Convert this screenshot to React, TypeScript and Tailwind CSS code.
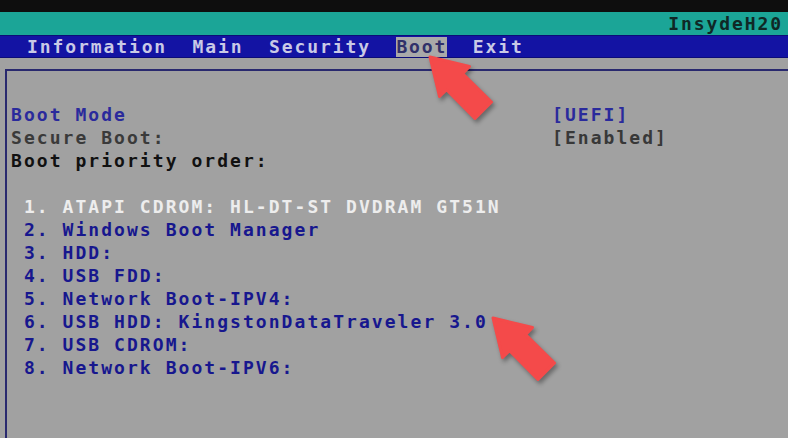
const items = [
  { text: ' 1. ATAPI CDROM: HL-DT-ST DVDRAM GT51N', color: 'text-[#ededed]' },
  { text: ' 2. Windows Boot Manager', color: 'text-[#17178e]' },
  { text: ' 3. HDD:', color: 'text-[#17178e]' },
  { text: ' 4. USB FDD:', color: 'text-[#17178e]' },
  { text: ' 5. Network Boot-IPV4:', color: 'text-[#17178e]' },
  { text: ' 6. USB HDD: KingstonDataTraveler 3.0', color: 'text-[#17178e]' },
  { text: ' 7. USB CDROM:', color: 'text-[#17178e]' },
  { text: ' 8. Network Boot-IPV6:', color: 'text-[#17178e]' },
]

function Arrow({ className }: { className: string }) {
  return (
    <svg
      width="76"
      height="76"
      viewBox="0 0 76 76"
      className={`absolute drop-shadow-[2px_3px_2px_rgba(0,0,0,0.35)] ${className}`}
    >
      <polygon
        points="6,6 45.5,15.5 38.6,22.6 67.5,51 51,67.5 22.6,38.6 15.5,45.5"
        fill="#f44a4a"
        stroke="#f44a4a"
        strokeWidth="3"
        strokeLinejoin="round"
      />
    </svg>
  )
}

export default function App() {
  return (
    <div className="relative flex flex-col w-[788px] h-[438px] overflow-hidden bg-[#a1a1a1] font-['DejaVu_Sans_Mono','Liberation_Mono',monospace] text-[18px] font-bold leading-[23px] tracking-[1.9px] whitespace-pre">
      <div className="h-[12px] bg-[#0e0e0e]" />

      <div className="h-[23px] flex items-center justify-end pr-[5px] bg-[#1ba597] text-[#0f2826]">
        InsydeH20
      </div>

      {/* menu bar */}
      <div className="h-[23px] flex items-center pl-[27px] bg-[#1313a3] border-y border-[#0c0c78] text-[#c9c9e6]">
        <span>Information  Main  Security  </span>
        <span className="h-[20px] flex items-center bg-[#a9a9a9] text-[#30306a]">Boot</span>
        <span>  Exit</span>
      </div>

      <div className="flex-1 mt-[11px] ml-[5px] border-t-2 border-l-2 border-[#29296e] pt-[32px] pl-[4px] tracking-[2.05px]">
        <div className="flex">
          <span className="w-[541px] text-[#2a2a9c]">Boot Mode</span>
          <span className="text-[#2a2a9c]">[UEFI]</span>
        </div>
        <div className="flex">
          <span className="w-[541px] text-[#3a3a3a]">Secure Boot:</span>
          <span className="text-[#383838]">[Enabled]</span>
        </div>
        <div className="text-[#111111]">Boot priority order:</div>
        <div className="h-[23px]" />
        {items.map((item) => (
          <div key={item.text} className={item.color}>
            {item.text}
          </div>
        ))}
      </div>

      <Arrow className="left-[424px] top-[51px]" />
      <Arrow className="left-[487px] top-[312px]" />
    </div>
  )
}
